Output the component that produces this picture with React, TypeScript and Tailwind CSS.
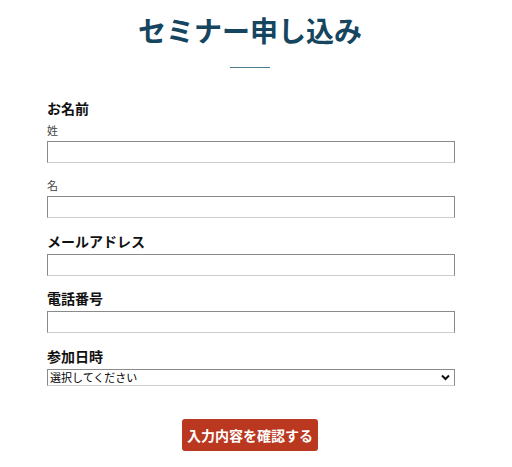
import React from "react";

const font = { fontFamily: '"Noto Sans CJK JP", "Noto Sans", sans-serif' };

function Field({ label }: { label?: string }) {
  return (
    <input
      type="text"
      aria-label={label}
      className="block h-[22px] w-[408px] border border-[#8a8a8a] border-b-[#cdcdcd] bg-white outline-none"
    />
  );
}

export default function App() {
  return (
    <div className="min-h-[467px] w-[512px] bg-white text-[#111]" style={font}>
      <div className="flex flex-col items-center pr-[12px] pt-[16px]">
        <h1 className="text-[28px] font-bold leading-[28px] text-[#15455f]">セミナー申し込み</h1>
        <div className="mt-[23px] h-px w-[40px] bg-[#4d7b92]" />
      </div>
      <form className="ml-[47px] flex w-[408px] flex-col">
        <div className="mt-[30px] text-[14px] font-bold leading-[20px]">お名前</div>
        <label className="mt-[4px] text-[11px] leading-[16px] text-[#444]">姓</label>
        <div className="mt-[3px]"><Field label="姓" /></div>
        <label className="mt-[14px] text-[11px] leading-[16px] text-[#444]">名</label>
        <div className="mt-[3px]"><Field label="名" /></div>
        <div className="mt-[13px] text-[14px] font-bold leading-[20px]">メールアドレス</div>
        <div className="mt-[3px]"><Field label="メールアドレス" /></div>
        <div className="mt-[12px] text-[14px] font-bold leading-[20px]">電話番号</div>
        <div className="mt-[3px]"><Field label="電話番号" /></div>
        <div className="mt-[13px] text-[14px] font-bold leading-[20px]">参加日時</div>
        <div className="relative mt-[3px] flex h-[17px] w-[408px] items-center border border-[#8a8a8a] border-b-[#cdcdcd] bg-white">
          <span className="pl-[2px] text-[11px] leading-[15px] text-black">選択してください</span>
          <svg className="absolute right-[4px] top-[4px]" width="9" height="7" viewBox="0 0 9 7">
            <path d="M1 1.5 L4.5 5 L8 1.5" fill="none" stroke="#111" strokeWidth="2" />
          </svg>
        </div>
      </form>
      <div className="mt-[33px] flex justify-center pr-[12px]">
        <button
          type="button"
          className="h-[32px] w-[136px] rounded-[3px] bg-[#b9381f] text-[14px] font-bold text-white"
        >
          入力内容を確認する
        </button>
      </div>
    </div>
  );
}
